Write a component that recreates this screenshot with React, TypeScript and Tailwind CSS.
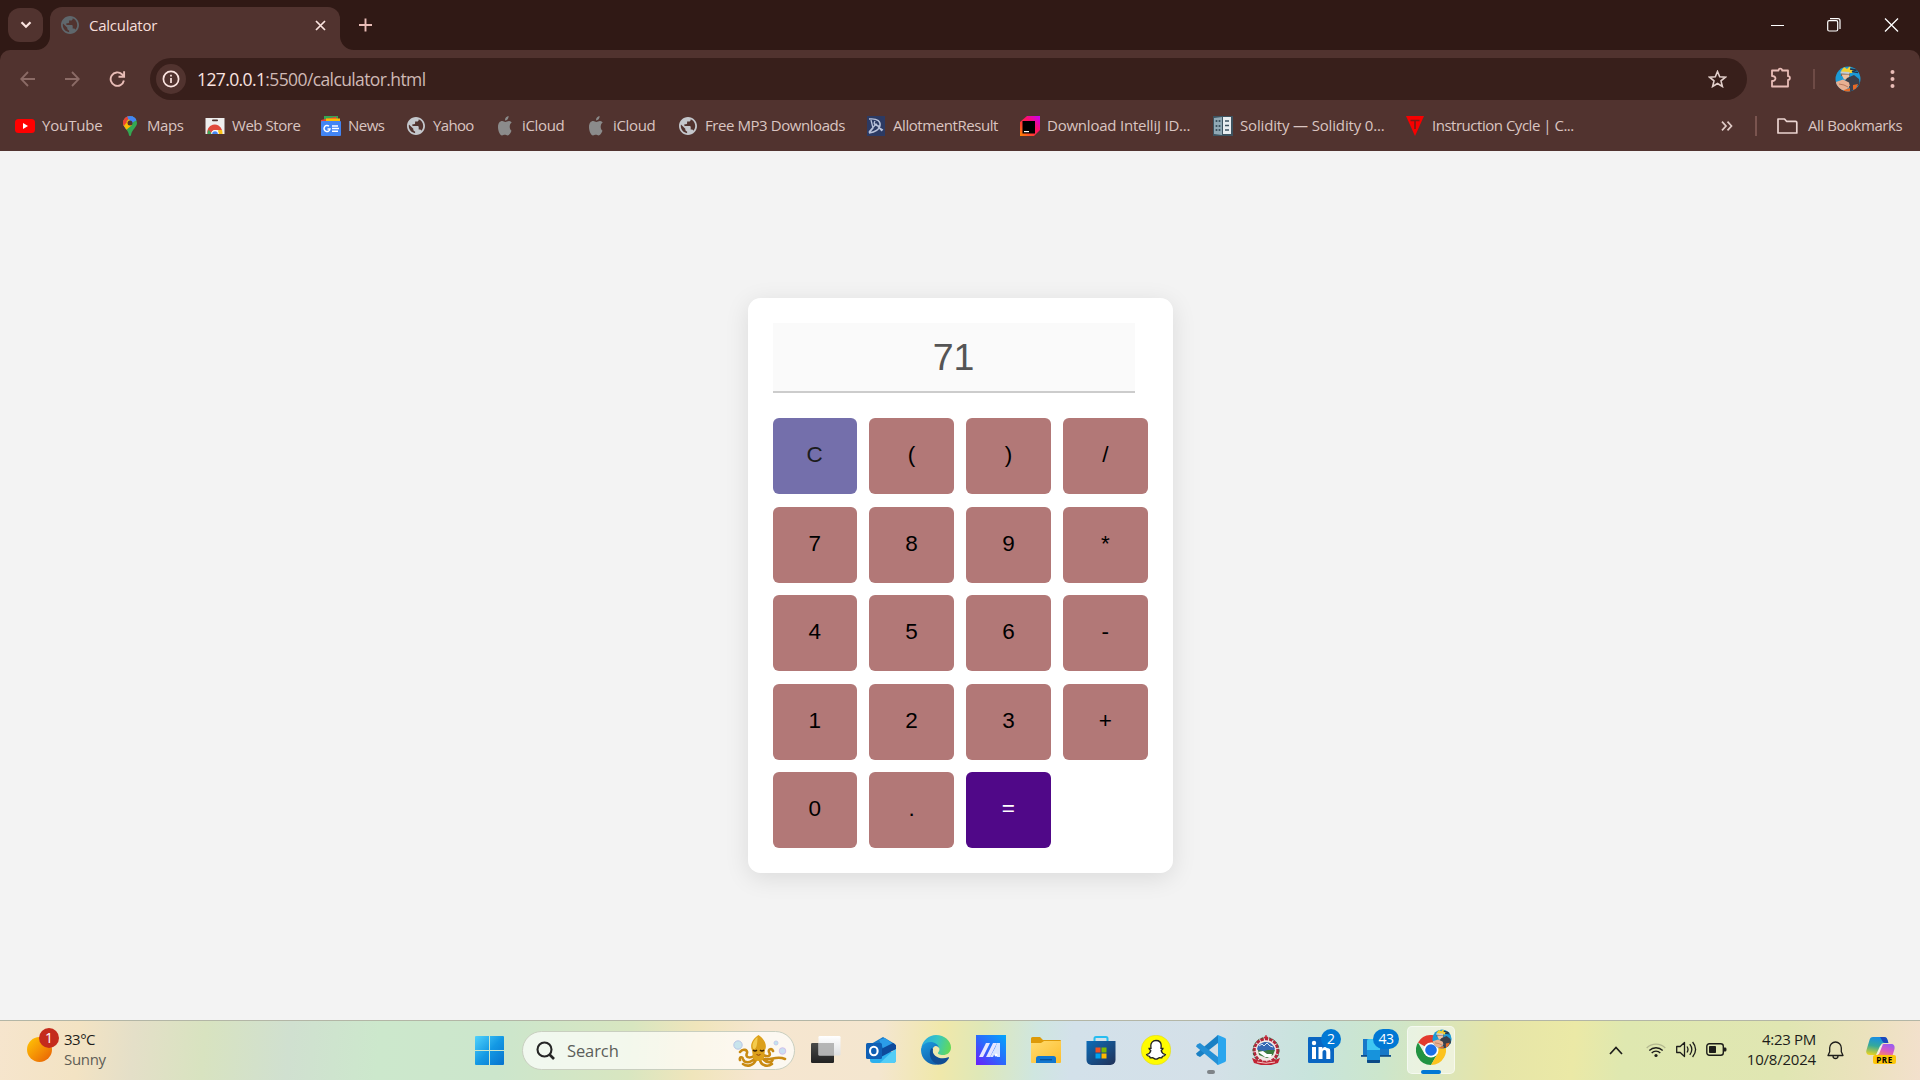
import React from "react";

type P = { children?: React.ReactNode };

const Globe = ({ color, size = 18 }: { color: string; size?: number }) => (
  <svg width={size} height={size} viewBox="2 2 20 20">
    <path fill={color} d="M12 2C6.480 2 2 6.480 2 12s4.480 10 10 10 10-4.480 10-10S17.520 2 12 2zm-1 17.930c-3.950-.49-7-3.850-7-7.930 0-.62.08-1.210.21-1.790L9 15v1c0 1.100.9 2 2 2v1.930zm6.900-2.540c-.26-.81-1-1.390-1.900-1.390h-1v-3c0-.55-.45-1-1-1H8v-2h2c.55 0 1-.45 1-1V7h2c1.100 0 2-.9 2-2v-.41c2.930 1.190 5 4.060 5 7.410 0 2.080-.8 3.970-2.100 5.390z" />
  </svg>
);

const YouTube = () => (
  <svg width="20" height="20" viewBox="0 0 20 20">
    <rect y="3" width="20" height="14" rx="3.5" fill="#f00" />
    <path d="M8 7l5 3-5 3z" fill="#fff" />
  </svg>
);

const MapsPin = () => (
  <svg width="20" height="20" viewBox="0 0 20 20">
    <defs>
      <clipPath id="pin">
        <path d="M10 0a7 7 0 0 1 7 7c0 4-5 6.500-5.900 11.700-.3 1.700-1.900 1.700-2.200 0C8 13.500 3 11 3 7a7 7 0 0 1 7-7z" />
      </clipPath>
    </defs>
    <g clipPath="url(#pin)">
      <rect width="20" height="20" fill="#34a853" />
      <path d="M0 0h11L4 9 0 5z" fill="#ea4335" />
      <path d="M7 0h13v3L10 7z" fill="#4285f4" />
      <path d="M0 13 12 0h8L10 9l-6 5z" fill="#4285f4" />
      <path d="M0 3l7-3 0 3-4 5z" fill="#ea4335" />
      <path d="M2 10 9 3l3 6-7 6z" fill="#fbbc04" />
      <path d="M2 3l5 3-4 5z" fill="#ea4335" />
    </g>
    <circle cx="10" cy="7" r="2.500" fill="#51332f" />
  </svg>
);

const WebStore = () => (
  <svg width="20" height="20" viewBox="0 0 20 20">
    <rect x="0.500" y="2" width="19" height="16" fill="#eee" />
    <rect x="7" y="3.600" width="6" height="1.600" rx=".8" fill="#51332f" />
    <path d="M2.500 18a7.500 7.500 0 0 1 14.500-4H10a3.500 3.500 0 0 0-3.500 4z" fill="#e04a3c" />
    <path d="M2.500 18c0-2 .5-3 1.200-4.200L7 18z" fill="#3aa757" />
    <path d="M17 14c.5 1.300.5 2.600.5 4H13l.3-4z" fill="#fbc116" />
    <path d="M6.200 18a3.800 3.800 0 0 1 7.600 0z" fill="#fff" />
    <path d="M7.200 18a2.800 2.800 0 0 1 5.600 0z" fill="#4285f4" />
  </svg>
);

const News = () => (
  <svg width="20" height="20" viewBox="0 0 20 20">
    <path d="M3 0h14v8H3z" fill="#34a853" />
    <path d="M0 4 15 .7 17 8H0z" fill="#ea4335" />
    <path d="M5 2.500h14V8H5z" fill="#fbbc04" />
    <rect y="5" width="20" height="15" rx="1" fill="#4285f4" />
    <path d="M8 10.300A3 3 0 1 0 9 13H6.500" stroke="#fff" strokeWidth="1.500" fill="none" />
    <path d="M11 10h6M11 12.600h7M11 15.200h6" stroke="#fff" strokeWidth="1.500" />
  </svg>
);

const Apple = () => (
  <svg width="20" height="20" viewBox="0 0 20 20" fill="#8b8b8b">
    <path d="M13.600 0c.2 2.500-1.600 4.400-3.600 4.400C9.800 2.200 11.600.3 13.600 0zM16.500 14.800c-1 2.600-2.300 4.600-3.900 4.600-1.200 0-1.600-.7-2.800-.7s-1.700.7-2.800.7C5 19.400 3 15.200 3 11c0-3.800 2-5.900 4.200-5.900 1.500 0 2.200.8 3.200.8s2.200-1 3.800-.9c1.200.1 1.900.6 2.500 1.500-2.700 1.900-2.500 6.700-.2 8.300z" />
  </svg>
);

const Allot = () => (
  <svg width="20" height="20" viewBox="0 0 20 20" fill="none" stroke="#b9c2da" strokeWidth="1.300">
    <rect x="1" y="0" width="18" height="20" fill="#2c3a63" stroke="none" />
    <path d="M3 3c9-1 12 3 11 7s-5 6-11 7M5 4l2 8-4 5M3 16l7-8 6 7M9 5c-2 3 0 5 5 5M12 11l5 3" />
  </svg>
);

const IntelliJ = () => (
  <svg width="20" height="20" viewBox="0 0 20 20">
    <defs>
      <linearGradient id="ij" x1="0" y1="1" x2="1" y2="0">
        <stop offset="0" stopColor="#ff8a00" />
        <stop offset=".35" stopColor="#fe3a35" />
        <stop offset=".6" stopColor="#fe0e6a" />
        <stop offset="1" stopColor="#c800ff" />
      </linearGradient>
    </defs>
    <path d="M7 0h13v14l-6 6H0V6z" fill="url(#ij)" />
    <rect x="2.500" y="5" width="12.500" height="12.500" />
    <rect x="4" y="15" width="5" height="1.200" fill="#fff" />
  </svg>
);

const Solidity = () => (
  <svg width="20" height="20" viewBox="0 0 20 20">
    <rect x="0" y="0" width="20" height="20" fill="#3d5360" />
    <path d="M1 2l8-1v18l-8-1z" fill="#90a8b4" />
    <path d="M10 1h8v17h-8z" fill="#e8edf0" />
    <path d="M3.500 4v2M6.500 4v2M3.500 9v2M6.500 9v2M3.500 13v2M6.500 13v2M12 5h4M12 9.500h4M12 14h4" stroke="#3d5360" strokeWidth="1.700" />
  </svg>
);

const Instruction = () => (
  <svg width="20" height="20" viewBox="0 0 20 20">
    <path d="M1 0h18L10 20z" fill="#f80000" />
    <path d="M5.500 4.500h9M10 4v9" stroke="#7a1a16" strokeWidth="1.700" />
  </svg>
);

const bookmarks = [
  { label: "YouTube", icon: <YouTube />, box: "w-[105px]", track: "tracking-[-0.15px]" },
  { label: "Maps", icon: <MapsPin />, box: "w-[85px]", track: "tracking-[-0.4px]" },
  { label: "Web Store", icon: <WebStore />, box: "w-[116px]", track: "tracking-[-0.45px]" },
  { label: "News", icon: <News />, box: "w-[85px]", track: "tracking-[-0.5px]" },
  { label: "Yahoo", icon: <Globe color="#c4c7cc" />, box: "w-[89px]", track: "tracking-[-0.65px]" },
  { label: "iCloud", icon: <Apple />, box: "w-[91px]", track: "tracking-[-0.35px]" },
  { label: "iCloud", icon: <Apple />, box: "w-[92px]", track: "tracking-[-0.35px]" },
  { label: "Free MP3 Downloads", icon: <Globe color="#c4c7cc" />, box: "w-[188px]", track: "tracking-[-0.43px]" },
  { label: "AllotmentResult", icon: <Allot />, box: "w-[154px]", track: "tracking-[-0.43px]" },
  { label: "Download IntelliJ ID...", icon: <IntelliJ />, box: "w-[193px]", track: "tracking-[-0.22px]" },
  { label: "Solidity — Solidity 0...", icon: <Solidity />, box: "w-[192px]", track: "tracking-[-0.16px]" },
  { label: "Instruction Cycle | C...", icon: <Instruction />, box: "w-[180px]", track: "tracking-[-0.48px]" },
];

const Naruto = ({ size }: { size: number }) => (
  <svg width={size} height={size} viewBox="0 0 26 26">
    <defs>
      <clipPath id="avatar"><circle cx="13" cy="13" r="12.500" /></clipPath>
    </defs>
    <g clipPath="url(#avatar)">
      <rect width="26" height="26" fill="#1c9bd6" />
      <path d="M6 5l3-4 3 2 3-3 1 4 4-1-3 4H7z" fill="#f2cf33" />
      <path d="M15 3l7 1-5 1.500 6 1" stroke="#22344a" strokeWidth="1.300" fill="none" />
      <path d="M6 7h9v3H6z" fill="#6a5a50" />
      <path d="M6.500 8.500h8l-1 5H9z" fill="#efc1a0" />
      <path d="M5.500 5.500l9 .5v2l-9-.5z" fill="#c5ced6" />
      <path d="M12 12l7-3 5 4 1 6-6 2-7-2-2-4z" fill="#3b3f4a" />
      <path d="M1 16l7-2.500 6 3 1 4-5 4H4l-3-3z" fill="#e8b092" />
      <path d="M4 18l5 1 4 2" stroke="#b87a5e" fill="none" />
      <path d="M14 20l7-1 1 4-7 3z" fill="#3b4150" />
      <path d="M18 19l5-1-2 5-3 1z" fill="#e66a26" />
      <path d="M9 24l6-2v4H9z" fill="#e66a26" />
    </g>
  </svg>
);

const Browser = () => (
  <header className="h-[151px] bg-[#51332f] font-['Open_Sans',sans-serif]">
    <div className="flex h-[50px] items-start bg-[#301915]">
      <button className="ml-2 mt-2 flex h-[34px] w-[35px] items-center justify-center rounded-xl bg-[#51332f]">
        <svg width="12" height="8" viewBox="0 0 12 8" fill="none" stroke="#fbe4e0" strokeWidth="2.200">
          <path d="M1.500 1.200 6 5.800l4.500-4.600" />
        </svg>
      </button>
      <div className="relative ml-[7px] mt-[7px] flex h-[43px] w-[290px] items-center rounded-t-[12px] bg-[#51332f] pl-[11px]">
        <svg className="absolute bottom-0 -left-[14px]" width="14" height="14"><path d="M14 0v14H0A14 14 0 0 0 14 0z" fill="#51332f" /></svg>
        <svg className="absolute bottom-0 -right-[14px]" width="14" height="14"><path d="M0 0v14h14A14 14 0 0 1 0 0z" fill="#51332f" /></svg>
        <div className="-mt-[7px] flex flex-1 items-center">
          <Globe color="#5f676c" />
          <span className="-mt-px ml-[10px] flex-1 text-[15px] leading-5 tracking-[-0.25px] text-[#f7dfdb]">Calculator</span>
          <svg className="mr-[14px]" width="11" height="11" viewBox="0 0 11 11" stroke="#fbe4e0" strokeWidth="1.700"><path d="M1 1l9 9M10 1l-9 9" /></svg>
        </div>
      </div>
      <svg className="ml-[19px] mt-[18px]" width="13" height="14" viewBox="0 0 13 14" stroke="#e9bdb7" strokeWidth="1.900"><path d="M0 7h13M6.500.5v13" /></svg>
      <div className="ml-auto flex h-[49px] items-center pr-[21px]">
        <svg width="13" height="14" viewBox="0 0 13 14"><path d="M0 7.500h13" stroke="#fff" strokeWidth="1" /></svg>
        <svg className="ml-[43px]" width="14" height="14" viewBox="0 0 14 14" fill="none" stroke="#fff" strokeWidth="1.200">
          <rect x=".7" y="2.700" width="10" height="10.300" rx="1.500" />
          <path d="M3 .7h8a2 2 0 0 1 2 2V11" />
        </svg>
        <svg className="ml-[43px]" width="15" height="14" viewBox="0 0 15 14" stroke="#fff" strokeWidth="1.300"><path d="M1 .5l13 13M14 .5l-13 13" /></svg>
      </div>
    </div>
    <div className="bg-[#301915]">
      <div className="flex h-[58px] items-center rounded-t-[10px] bg-[#51332f]">
        <svg className="ml-5" width="15" height="16" viewBox="0 0 15 16" fill="none" stroke="#8b6b66" strokeWidth="1.800"><path d="M15 8H1.500M8 1 1.200 8 8 15" /></svg>
        <svg className="ml-[30px]" width="15" height="16" viewBox="0 0 15 16" fill="none" stroke="#8b6b66" strokeWidth="1.800"><path d="M0 8h13.500M7 1l6.800 7L7 15" /></svg>
        <svg className="ml-[29px]" width="17" height="16" viewBox="0 0 17 16" fill="none" stroke="#e9bdb7" strokeWidth="1.900"><path d="M14.900 9.500A6.700 6.700 0 1 1 13 3.300l1.700 1.800M15.100.3v5.500H9.500" /></svg>
        <div className="ml-6 flex h-[42px] w-[1597px] items-center rounded-full bg-[#381f1b]">
          <span className="ml-[6px] flex size-[30px] items-center justify-center rounded-full bg-[#51332f]">
            <svg width="18" height="18" viewBox="0 0 18 18" fill="none" stroke="#fbe4e0" strokeWidth="1.700"><circle cx="9" cy="9" r="7.600" /><path d="M9 8v5M9 4.800v1.800" /></svg>
          </span>
          <span className="ml-[11px] flex-1 text-[17.500px] leading-6 tracking-[-0.61px] text-[#cfb9b5]"><span className="text-[#fbe4e0]">127.0.0.1</span>:5500/calculator.html</span>
          <svg className="mr-5" width="19" height="18" viewBox="0 0 19 18" fill="none" stroke="#e2cfcb" strokeWidth="1.600"><path d="M9.500 1.500l2.200 5.300 5.700.4-4.400 3.700 1.400 5.600-4.900-3-4.900 3L6 10.900 1.600 7.200l5.700-.4z" /></svg>
        </div>
        <svg className="ml-6 -mt-1" width="21" height="21" viewBox="0 0 21 21" fill="none" stroke="#e9bdb7" strokeWidth="1.800">
          <path d="M1 3.500h6.500a1.800 1.800 0 0 1 3.600 0H17v5.700a1.900 1.900 0 0 1 0 3.800v6.500H1v-5.500c4.600.2 4.600-5.200 0-5z" strokeLinejoin="round" />
        </svg>
        <span className="ml-[21px] h-5 w-0.5 bg-[#6e4b46]" />
        <span className="ml-5"><Naruto size={26} /></span>
        <svg className="ml-[29px]" width="5" height="18" viewBox="0 0 5 18" fill="#e9bdb7"><circle cx="2.500" cy="2" r="2" /><circle cx="2.500" cy="9" r="2" /><circle cx="2.500" cy="16" r="2" /></svg>
      </div>
    </div>
    <nav className="flex h-[36px] items-center pl-[15px] text-[15px] leading-5 text-[#dac5c1]">
      {bookmarks.map((b, i) => (
        <a key={i} className={`flex shrink-0 items-center gap-[7px] whitespace-nowrap ${b.box}`}>
          <span className="flex size-5 shrink-0 items-center justify-center">{b.icon}</span>
          <span className={`-mt-0.5 ${b.track}`}>{b.label}</span>
        </a>
      ))}
      <svg className="ml-auto" width="12" height="10" viewBox="0 0 12 10" fill="none" stroke="#e0cbc7" strokeWidth="1.700"><path d="M1 .7 5 5 1 9.300M6.500.7 10.500 5l-4 4.300" /></svg>
      <span className="ml-[22px] h-5 w-[2px] bg-[#7a544f]" />
      <svg className="ml-5" width="21" height="16" viewBox="0 0 21 16" fill="none" stroke="#ead4d0" strokeWidth="1.700"><path d="M1 1h6.500l2 2.300H18.500c.8 0 1.300.5 1.300 1.200V15H1z" strokeLinejoin="round" /></svg>
      <span className="-mt-0.5 ml-[10px] w-[112px] whitespace-nowrap tracking-[-0.45px]">All Bookmarks</span>
    </nav>
  </header>
);

const keys = ["C", "(", ")", "/", "7", "8", "9", "*", "4", "5", "6", "-", "1", "2", "3", "+", "0", ".", "="];
const tone = (k: string) =>
  k === "C" ? "bg-[#746fab] text-[#1c1c1c]" : k === "=" ? "bg-[#500888] text-white" : "bg-[#b27877] text-black";

const Calculator = () => (
  <main className="flex h-[869px] items-center justify-center bg-[#f3f3f3] font-['Liberation_Sans',Arial,sans-serif]">
    <section className="h-[575px] w-[425px] rounded-[12.500px] bg-white p-[25px] shadow-[0_5px_25px_rgba(0,0,0,0.1)]">
      <div className="h-[70px] w-[362px] border-b-2 border-[#ccc] bg-[#fafafa] text-center text-[37.500px] leading-[68px] text-[#555]">71</div>
      <div className="mt-[25px] grid grid-cols-4 gap-[12.500px]">
        {keys.map((k) => (
          <button key={k} className={`h-[76px] rounded-[6px] pb-[2px] text-[22.500px] ${tone(k)}`}>{k}</button>
        ))}
      </div>
    </section>
  </main>
);

const Slot = ({ children }: P) => <div className="relative flex h-[48px] w-[55px] shrink-0 items-center justify-center">{children}</div>;

const Octopus = () => (
  <svg width="54" height="34" viewBox="0 0 54 34">
    <circle cx="5" cy="11" r="4.200" fill="#c8e4ec" stroke="#b9c6e6" />
    <circle cx="43" cy="9" r="2" fill="#bfe6ee" stroke="#c7c9ec" />
    <circle cx="49.500" cy="17" r="3.300" fill="#c9dff2" stroke="#d3c0ec" />
    <g fill="none" stroke="#c98a12" strokeWidth="2.600" strokeLinecap="round">
      <path d="M21 22c-5 3-9 1-7-3 1-3-4-5-7-1M22 24c-5 6-11 5-12 1-.5-3-4-2-3 1M23 26c-3 6-9 7-13 4M27 26c1 6 8 7 12 4M29 24c5 6 10 5 11 1M30 21c6 3 8 0 6-3-1-3 3-4 4-1M32 25c6 2 11-4 20 0" />
    </g>
    <path d="M25.500 1c6 4 9 10 6.500 15l-1 8c-2 4-9 4-11 0l-1-8C16.500 11 19.500 5 25.500 1z" fill="#dca01a" />
    <path d="M24.500 3c-5 4-6 9-4 12 3 1 4-6 4-12z" fill="#f4cb4c" />
    <path d="M20 16q2 2 4 0M27 16q2 2 4 0" stroke="#3a2405" strokeWidth="1.400" fill="none" />
    <path d="M23.500 20.500q2 1.500 4 0" stroke="#8a3d0a" fill="none" />
  </svg>
);

const TaskView = () => (
  <svg width="30" height="30" viewBox="0 0 30 30">
    <defs>
      <linearGradient id="tv" x1="0" y1="0" x2="0" y2="1"><stop stopColor="#4a4a48" /><stop offset="1" stopColor="#222" /></linearGradient>
      <linearGradient id="tw" x1="0" y1="0" x2="0" y2="1"><stop stopColor="#fff" /><stop offset="1" stopColor="#dfe0e2" /></linearGradient>
    </defs>
    <rect y="8" width="23" height="20" rx="1.300" fill="url(#tv)" />
    <rect x="7.500" y="1" width="22" height="19.500" rx="1.300" fill="url(#tw)" />
    <path d="M7.500 8H23v12.500H7.500z" fill="#aaa" opacity=".85" />
  </svg>
);

const Outlook = () => (
  <svg width="30" height="30" viewBox="0 0 30 30">
    <path d="M5 9 17 2l12 7v6H5z" fill="#1978c6" />
    <path d="M13 5l6-2 8 6-9 6z" fill="#2b9ce8" />
    <path d="M4 17h26v8a3 3 0 0 1-3 3H7a3 3 0 0 1-3-3z" fill="#2bb0ee" />
    <path d="M30 13v12a3 3 0 0 1-3 3H14z" fill="#53cdf7" />
    <path d="M15 14 27 8l3 2v4L15 22z" fill="#0d4a9c" />
    <rect y="8" width="16" height="16" rx="1.500" fill="#0f5fb4" />
    <ellipse cx="7.800" cy="16" rx="3.800" ry="4.300" fill="none" stroke="#fff" strokeWidth="2.100" />
  </svg>
);

const Edge = () => (
  <svg width="30" height="30" viewBox="0 0 30 30">
    <defs>
      <linearGradient id="e1" x1="0" y1=".3" x2="1" y2=".5"><stop stopColor="#2aa8e0" /><stop offset=".5" stopColor="#35c6c4" /><stop offset="1" stopColor="#63d957" /></linearGradient>
      <linearGradient id="e2" x1="0" y1="0" x2=".5" y2="1"><stop stopColor="#1b9be0" /><stop offset="1" stopColor="#1263ae" /></linearGradient>
    </defs>
    <path d="M.5 12C2 5 8 0 15 0c8.500 0 15 6 15 12.500 0 5-4 7.500-8 7.500-3.500 0-5.500-1.300-5-2.300 3-3 1-7-2.500-7.500z" fill="url(#e1)" />
    <path d="M0 15C0 10 5 7 9.500 7c4 0 8 2.500 8.500 6-2-3.500-6-2.500-6.500 2C11 22 18 29 19 29c-8 3-19-3-19-14z" fill="url(#e2)" />
    <path d="M10.500 13C7 18 9 27 17 29.500c5 .5 9-2.500 11-6.500.3-.8-.2-1-.8-.7C20 25.500 10 21 12 14z" fill="#114d94" />
  </svg>
);

const MyAsus = () => (
  <svg width="30" height="30" viewBox="0 0 30 30">
    <defs><linearGradient id="ma" x1="0" y1="1" x2="1" y2="0"><stop stopColor="#6a1dfb" /><stop offset=".5" stopColor="#2a6afc" /><stop offset="1" stopColor="#02a6fb" /></linearGradient></defs>
    <rect width="30" height="30" fill="url(#ma)" />
    <path d="M3 22 10 8h4L7 22zM10 22l7-14h4l-7 14z" fill="#e6e6ff" />
    <path d="M21 8h3v14h-3v-3l-3 1-1 2h-3l5-9z" fill="#d9e6ff" />
    <circle cx="20" cy="20" r="1.500" fill="#fff" />
  </svg>
);

const Folder = () => (
  <svg width="30" height="30" viewBox="0 0 30 30">
    <defs><linearGradient id="fo" x1="0" y1="0" x2="1" y2="1"><stop stopColor="#ffdc70" /><stop offset="1" stopColor="#fdbd2b" /></linearGradient></defs>
    <path d="M0 3.500A1.500 1.500 0 0 1 1.500 2H9l3 3h17a1 1 0 0 1 1 1v10H0z" fill="#dd9a08" />
    <path d="M0 8h10l3-2h17v21a1 1 0 0 1-1 1H1a1 1 0 0 1-1-1z" fill="url(#fo)" />
    <path d="M5 28v-4.500A2.500 2.500 0 0 1 7.500 21h15a2.500 2.500 0 0 1 2.500 2.500V28z" fill="#1177cf" />
    <path d="M9 24.700h12" stroke="#0a4f94" strokeWidth="1.200" />
  </svg>
);

const Store = () => (
  <svg width="30" height="30" viewBox="0 0 30 30">
    <defs><linearGradient id="st" x1="0" y1="0" x2="1" y2="1"><stop stopColor="#0d6cb7" /><stop offset="1" stopColor="#213158" /></linearGradient></defs>
    <path d="M8.500 7V3.500A1.500 1.500 0 0 1 10 2h10a1.500 1.500 0 0 1 1.500 1.500V7" fill="none" stroke="#27bdf0" strokeWidth="2" />
    <path d="M.5 6h29v19a5 5 0 0 1-5 5h-19a5 5 0 0 1-5-5z" fill="url(#st)" />
    <path d="M9.500 12.500h5v5h-5z" fill="#f25022" /><path d="M15.500 12.500h5v5h-5z" fill="#7fba00" />
    <path d="M9.500 18.500h5v5h-5z" fill="#00a4ef" /><path d="M15.500 18.500h5v5h-5z" fill="#ffb900" />
  </svg>
);

const Snap = () => (
  <svg width="30" height="30" viewBox="0 0 30 30">
    <circle cx="15" cy="15" r="14.800" fill="#fffc00" stroke="#d5cf2a" strokeWidth=".5" />
    <path d="M15 5.500c3.500 0 5.200 2.500 5.200 5.300l-.2 2.500 2 .1c.2 1.200-1.800 1.500-1.800 2.200.4 2.100 2.300 3.300 4.200 3.900-.1 1.300-1.700 1.600-3 1.900l-.6 1.400-2.300-.1c-1.200.3-2 1.500-3.500 1.500s-2.300-1.200-3.500-1.500l-2.300.1-.6-1.400c-1.300-.3-2.900-.6-3-1.900 1.900-.6 3.800-1.800 4.200-3.900 0-.7-2-1-1.800-2.200l2-.1-.2-2.500c0-2.800 1.700-5.300 5.200-5.300z" fill="#fff" stroke="#222" strokeWidth="1.300" />
  </svg>
);

const VSCode = () => (
  <svg width="30" height="30" viewBox="0 0 30 30">
    <path d="M22 0 0 18.500l1 2 3 1.500L22 8z" fill="#1a80c4" />
    <path d="M22 30 0 11.500l1-2L4 8l18 14z" fill="#2490d6" />
    <path d="M20.500.8 22 0l7 3c.6.3 1 1 1 1.700v20.600c0 .7-.4 1.400-1 1.700l-7 3-1.500-.8c.9.400 1.500-.2 1.500-1.200V2c0-1-.6-1.600-1.500-1.200z" fill="#2ba6ee" />
  </svg>
);

const Emblem = () => (
  <svg width="30" height="30" viewBox="0 0 30 30">
    <circle cx="15" cy="15.500" r="11.800" fill="#f1e7e4" stroke="#b3263a" strokeWidth="3" strokeDasharray="3.500 1" />
    <circle cx="15" cy="15.500" r="13" fill="none" stroke="#39683c" strokeWidth="1" strokeDasharray="2 2" />
    <path d="M6 14c1-5 5-7 9-7s8 3 9 7l-2 3H8z" fill="#3668b4" />
    <path d="M8 11l3-2 2 2 3-3 3 3 3 1" stroke="#dce9f7" fill="none" />
    <path d="M7 15l6 1 4-1 7 0-2 5-6 3-8-3z" fill="#3c7b40" />
    <path d="M7 17l5-1 4 3 5 0-1 3-6 0z" fill="#fff" />
    <path d="M1 23l8 3q6 1.500 12 0l8-3-2 5-7 2H10l-7-2z" fill="#c22434" />
    <path d="M6 27q9 2.500 18 0" stroke="#f3c7c4" fill="none" />
    <path d="M15 .3v4M13 2.500h4" stroke="#c22434" strokeWidth="1.600" />
  </svg>
);

const LinkedIn = () => (
  <svg width="26" height="26" viewBox="0 0 26 26">
    <rect width="26" height="26" rx="1.200" fill="#0a66c2" />
    <circle cx="6" cy="6" r="2.200" fill="#fff" />
    <path d="M4 10h4v12H4zM10.500 10h3.800v1.700c.7-1.200 2-2 3.700-2 3.300 0 4.300 2.100 4.300 5.300v7h-4v-6.300c0-1.600-.4-2.700-1.700-2.700-1.500 0-2.100 1.100-2.100 2.700V22h-4z" fill="#fff" />
  </svg>
);

const PhoneLink = () => (
  <svg width="30" height="30" viewBox="0 0 30 30">
    <path d="M2 4h26v17H2z" fill="#1878c8" />
    <path d="M0 20h30v1.800H0z" fill="#0f4f8c" />
    <rect x="6" y="4" width="13" height="24" rx="1.300" fill="#1793dc" />
    <path d="M6 6a2 2 0 0 1 2-2h11v11H6z" fill="#3fc6f2" />
    <path d="M6 25h13v1.700c0 .7-.6 1.300-1.300 1.300H7.300C6.600 28 6 27.400 6 26.700z" fill="#0c4a86" />
  </svg>
);

const Chrome = () => (
  <svg width="30" height="30" viewBox="0 0 48 48">
    <path d="M24 24 3.200 12A24 24 0 0 1 44.800 12z" fill="#e33b2e" />
    <path d="M3.200 12 13.600 30 24 34l10.400-4L24 48A24 24 0 0 1 3.200 12z" fill="#229342" />
    <path d="M34.400 30 24 48a24 24 0 0 0 20.800-36H24z" fill="#fcc31e" />
    <circle cx="24" cy="24" r="12" fill="#fff" />
    <circle cx="24" cy="24" r="9.300" fill="#1b6fe8" />
  </svg>
);

const Copilot = () => (
  <svg width="30" height="30" viewBox="0 0 30 30">
    <defs>
      <linearGradient id="c1" x1=".5" y1="0" x2=".3" y2="1"><stop stopColor="#178de6" /><stop offset=".5" stopColor="#35a99a" /><stop offset="1" stopColor="#e7d322" /></linearGradient>
      <linearGradient id="c2" x1=".7" y1="0" x2=".3" y2="1"><stop stopColor="#9a5cf0" /><stop offset=".5" stopColor="#d75bc5" /><stop offset="1" stopColor="#ff8d55" /></linearGradient>
    </defs>
    <path d="M7 1h11c2 0 3 1 3.500 3L22 7h-4c-2 0-3 1-3.500 3L12 17c-.5 1.500-1.500 2-3 2H4c-3 0-4.500-2-3.500-5L3.500 4C4 2 5 1 7 1z" fill="url(#c1)" />
    <path d="M14 1h4c2 0 3 1 3.500 3L22.500 7H19c-2 0-3-3-5-6z" fill="#1b47bd" />
    <path d="M18 8h7c3 0 4 2 3.500 5l-2 6.500c-.5 1.500-1 1.500-2.500 1.500H11l4-10c.5-2 1-3 3-3z" fill="url(#c2)" />
    <path d="M14 10l3-2-4 10-3 1z" fill="#f6efe0" />
  </svg>
);

const Taskbar = () => (
  <footer className="flex h-[60px] items-start border-t border-[#b3b6a6] bg-[linear-gradient(95deg,#f6e5cd_0px,#f3e3c3_80px,#e4dfc8_135px,#d8e3c0_205px,#d0e0d0_290px,#cce8cc_380px,#cce6cc_500px,#d8e6c0_630px,#f0e5bb_695px,#f6e6d0_760px,#f4e6cf_880px,#f0e8aa_940px,#dfe8b8_980px,#cfe6e0_1035px,#d3e1ea_1070px,#d4e0e8_1210px,#c8e4dc_1310px,#cce6cc_1380px,#dde5b6_1450px,#e6e5a8_1490px,#ebe9a6_1570px,#dfe8b0_1620px,#e0e6b2_1780px,#ebe2bd_1860px,#f3e0cd_1920px)] font-['Open_Sans',sans-serif]">
    <div className="flex w-[475px] pl-[27px] pt-[7px]">
      <div className="relative h-[45px] w-8">
        <div className="mt-[9px] size-[25px] rounded-full bg-linear-to-br from-[#ffc806] to-[#e65a04]" />
        <span className="absolute left-3 top-0 flex size-5 items-center justify-center rounded-full bg-[#c42b1c] text-sm text-white">1</span>
      </div>
      <div className="ml-[5px] mt-px text-[15px] leading-5 text-[#1d1d1a]">
        <div className="tracking-[-0.5px]">33°C</div>
        <div className="tracking-[-0.3px] text-[#5f5e56]">Sunny</div>
      </div>
    </div>
    <svg className="mt-[15px]" width="29" height="29" viewBox="0 0 29 29">
      <defs><linearGradient id="win" gradientUnits="userSpaceOnUse" x1="0" y1="0" x2="29" y2="29"><stop stopColor="#50d2fb" /><stop offset=".5" stopColor="#1499e4" /><stop offset="1" stopColor="#0672cd" /></linearGradient></defs>
      <path d="M1 0h13v14H0V1a1 1 0 0 1 1-1zM15 0h13a1 1 0 0 1 1 1v13H15zM0 15h14v14H1a1 1 0 0 1-1-1zM15 15h14v13a1 1 0 0 1-1 1H15z" fill="url(#win)" />
    </svg>
    <div className="ml-[18px] mt-[10px] flex h-[39px] w-[273px] items-center rounded-full border border-[#c9cfc0] bg-white/70 pl-[13px]">
      <svg width="19" height="19" viewBox="0 0 19 19" fill="none" stroke="#262626" strokeWidth="2.100"><circle cx="8.500" cy="8.500" r="7" /><path d="M13.500 13.500l4.500 4.500" strokeWidth="2.600" /></svg>
      <span className="ml-[12px] flex-1 text-[16.500px] leading-6 tracking-[-0.1px] text-[#5c5e5a]">Search</span>
      <span className="mr-[7px]"><Octopus /></span>
    </div>
    <div className="ml-[3px] mt-[5px] flex">
      <Slot><TaskView /></Slot>
      <Slot><Outlook /></Slot>
      <Slot><Edge /></Slot>
      <Slot><MyAsus /></Slot>
      <Slot><Folder /></Slot>
      <Slot><Store /></Slot>
      <Slot><Snap /></Slot>
      <Slot><VSCode /><span className="absolute bottom-0 h-1 w-2 rounded-full bg-[#7e8388]" /></Slot>
      <Slot><Emblem /></Slot>
      <Slot>
        <LinkedIn />
        <span className="absolute left-[28px] top-[3px] flex size-5 items-center justify-center rounded-full bg-[#0078d4] text-sm text-white">2</span>
      </Slot>
      <Slot>
        <PhoneLink />
        <span className="absolute left-[25px] top-[3px] flex h-5 w-[26px] items-center justify-center rounded-full bg-[#0078d4] text-sm tracking-[-0.5px] text-white">43</span>
      </Slot>
      <Slot>
        <div className="relative flex size-12 items-center justify-center rounded-[5px] border border-white/50 bg-white/50">
          <Chrome />
          <span className="absolute left-6 top-[2px]"><Naruto size={20} /></span>
          <span className="absolute -bottom-px h-1 w-5 rounded-full bg-[#0078d4]" />
        </div>
      </Slot>
    </div>
    <svg className="ml-auto mt-[25px]" width="14" height="9" viewBox="0 0 14 9" fill="none" stroke="#1d1d1a" strokeWidth="1.700"><path d="M1 8l6-6.500L13 8" /></svg>
    <svg className="ml-[23px] mt-[21px]" width="20" height="16" viewBox="0 0 20 16" fill="none" stroke="#1d1d1a" strokeWidth="1.300">
      <path d="M.7 6a13 13 0 0 1 18.600 0" stroke="#b4b990" /><path d="M3.300 8.500a9.500 9.500 0 0 1 13.400 0M5.700 11a6 6 0 0 1 8.600 0" /><circle cx="10" cy="13.500" r="1.600" fill="#1d1d1a" stroke="none" />
    </svg>
    <svg className="ml-[10px] mt-[20px]" width="21" height="17" viewBox="0 0 21 17" fill="none" stroke="#1d1d1a" strokeWidth="1.300">
      <path d="M.7 5.500h3.500L8.500 1.500v14L4.200 11.500H.7z" strokeLinejoin="round" /><path d="M11 5.500q2 3 0 6M13.800 3.200q4 5.300 0 10.600M16.600 1q6 7.500 0 15" />
    </svg>
    <svg className="ml-[9px] mt-[22px]" width="21" height="13" viewBox="0 0 21 13">
      <rect x=".8" y=".8" width="16.500" height="11.400" rx="2.500" fill="none" stroke="#1d1d1a" strokeWidth="1.400" /><rect x="3" y="3" width="7" height="7" rx=".7" fill="#1d1d1a" /><path d="M18 4.500h1.500q1 0 1 2t-1 2H18z" fill="#1d1d1a" />
    </svg>
    <div className="ml-[11px] mt-[8px] w-[78px] whitespace-nowrap text-right text-[15px] leading-5 text-[#1d1d1a]">
      <div className="tracking-[-0.3px]">4:23 PM</div>
      <div className="-ml-4 tracking-[-0.2px]">10/8/2024</div>
    </div>
    <svg className="ml-[11px] mt-[20px]" width="17" height="19" viewBox="0 0 17 19" fill="none" stroke="#1d1d1a" strokeWidth="1.300"><path d="M8.500 1a5.800 5.800 0 0 1 5.800 5.800v4L16 14.500H1l1.700-3.700v-4A5.800 5.800 0 0 1 8.500 1zM6 15a2.500 2.500 0 0 0 5 0" strokeLinejoin="round" /></svg>
    <div className="relative ml-[22px] mr-[24px] mt-[15px] h-[30px] w-[30px]">
      <Copilot />
      <span className="absolute left-[7px] top-[19px] flex h-[9px] w-[23px] items-center justify-center rounded-[2px] bg-[#fcc60a] text-[8px] font-bold leading-none tracking-[0.5px] text-black">PRE</span>
    </div>
  </footer>
);

export default function App() {
  return (
    <div className="h-[1080px] w-[1920px] overflow-hidden">
      <Browser />
      <Calculator />
      <Taskbar />
    </div>
  );
}
